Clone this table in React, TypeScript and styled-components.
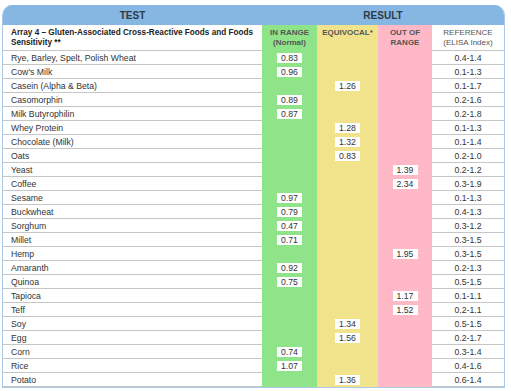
import React from "react";
import styled, { createGlobalStyle } from "styled-components";

type Tone = "plain" | "green" | "yellow" | "pink";

type RowData = {
  name: string;
  value: string;
  zone: "in" | "eq" | "out";
  range: string;
};

const rows: RowData[] = [
  { name: "Rye, Barley, Spelt, Polish Wheat", value: "0.83", zone: "in", range: "0.4-1.4" },
  { name: "Cow's Milk", value: "0.96", zone: "in", range: "0.1-1.3" },
  { name: "Casein (Alpha & Beta)", value: "1.26", zone: "eq", range: "0.1-1.7" },
  { name: "Casomorphin", value: "0.89", zone: "in", range: "0.2-1.6" },
  { name: "Milk Butyrophilin", value: "0.87", zone: "in", range: "0.2-1.8" },
  { name: "Whey Protein", value: "1.28", zone: "eq", range: "0.1-1.3" },
  { name: "Chocolate (Milk)", value: "1.32", zone: "eq", range: "0.1-1.4" },
  { name: "Oats", value: "0.83", zone: "eq", range: "0.2-1.0" },
  { name: "Yeast", value: "1.39", zone: "out", range: "0.2-1.2" },
  { name: "Coffee", value: "2.34", zone: "out", range: "0.3-1.9" },
  { name: "Sesame", value: "0.97", zone: "in", range: "0.1-1.3" },
  { name: "Buckwheat", value: "0.79", zone: "in", range: "0.4-1.3" },
  { name: "Sorghum", value: "0.47", zone: "in", range: "0.3-1.2" },
  { name: "Millet", value: "0.71", zone: "in", range: "0.3-1.5" },
  { name: "Hemp", value: "1.95", zone: "out", range: "0.3-1.5" },
  { name: "Amaranth", value: "0.92", zone: "in", range: "0.2-1.3" },
  { name: "Quinoa", value: "0.75", zone: "in", range: "0.5-1.5" },
  { name: "Tapioca", value: "1.17", zone: "out", range: "0.1-1.1" },
  { name: "Teff", value: "1.52", zone: "out", range: "0.2-1.1" },
  { name: "Soy", value: "1.34", zone: "eq", range: "0.5-1.5" },
  { name: "Egg", value: "1.56", zone: "eq", range: "0.2-1.7" },
  { name: "Corn", value: "0.74", zone: "in", range: "0.3-1.4" },
  { name: "Rice", value: "1.07", zone: "in", range: "0.4-1.6" },
  { name: "Potato", value: "1.36", zone: "eq", range: "0.6-1.4" },
];

const toneColors: Record<Tone, string> = {
  plain: "#ffffff",
  green: "#8fe48a",
  yellow: "#f0e38c",
  pink: "#ffb9c6",
};

const GlobalStyle = createGlobalStyle`
  body {
    margin: 0;
    background: #ffffff;
  }
`;

const Sheet = styled.div`
  margin: 5px 0 0 2px;
  width: 503px;
  box-sizing: border-box;
  border: 1px solid #a9c9e7;
  border-top: none;
  border-radius: 10px 10px 0 0;
  overflow: hidden;
  font-family: "Liberation Sans", Arial, sans-serif;
  color: #333333;
`;

const columns = "259px 55px 61px 54px 72px";

const Banner = styled.div`
  display: grid;
  grid-template-columns: 259px 242px;
  height: 20px;
  background: #86b7e2;
`;

const BannerTitle = styled.div`
  display: flex;
  align-items: center;
  justify-content: center;
  font-size: 10px;
  font-weight: bold;
  color: #2f3a45;
  padding-top: 1px;
`;

const Row = styled.div<{ $height: number }>`
  display: grid;
  grid-template-columns: ${columns};
  height: ${({ $height }) => $height}px;
`;

const Cell = styled.div<{ $tone: Tone; $align?: "left" | "center" }>`
  box-sizing: border-box;
  background: ${({ $tone }) => toneColors[$tone]};
  border-bottom: ${({ $tone }) => ($tone === "plain" ? "1px solid #c6c6c6" : "none")};
  display: flex;
  align-items: center;
  justify-content: ${({ $align }) => ($align === "left" ? "flex-start" : "center")};
  padding-left: ${({ $align }) => ($align === "left" ? "8px" : "0")};
  font-size: 8.7px;
  white-space: nowrap;
`;

const HeadCell = styled.div<{ $tone: Tone; $bold?: boolean; $align?: "left" | "center" }>`
  box-sizing: border-box;
  background: ${({ $tone }) => toneColors[$tone]};
  border-bottom: ${({ $tone }) => ($tone === "plain" ? "1px solid #c6c6c6" : "none")};
  padding: ${({ $align }) => ($align === "left" ? "3px 6px 0 8px" : "3px 0 0 0")};
  text-align: ${({ $align }) => ($align === "left" ? "left" : "center")};
  font-size: ${({ $align }) => ($align === "left" ? "8.2px" : "8px")};
  line-height: 9.5px;
  font-weight: ${({ $bold }) => ($bold ? "bold" : "normal")};
  color: ${({ $align }) => ($align === "left" ? "#222222" : "#555555")};
`;

const ValueBox = styled.span`
  display: inline-flex;
  align-items: center;
  justify-content: center;
  width: 25px;
  height: 10px;
  background: #ffffff;
  font-size: 8.7px;
  color: #333333;
`;

const zoneTone: Record<RowData["zone"], Tone> = {
  in: "green",
  eq: "yellow",
  out: "pink",
};

function ResultRow({ row }: { row: RowData }) {
  const tones: Tone[] = ["green", "yellow", "pink"];
  return (
    <Row $height={14}>
      <Cell $tone="plain" $align="left">{row.name}</Cell>
      {tones.map((tone) => (
        <Cell key={tone} $tone={tone}>
          {zoneTone[row.zone] === tone && <ValueBox>{row.value}</ValueBox>}
        </Cell>
      ))}
      <Cell $tone="plain">{row.range}</Cell>
    </Row>
  );
}

export default function App() {
  return (
    <>
      <GlobalStyle />
      <Sheet>
        <Banner>
          <BannerTitle>TEST</BannerTitle>
          <BannerTitle>RESULT</BannerTitle>
        </Banner>
        <Row $height={26}>
          <HeadCell $tone="plain" $align="left" $bold>
            Array 4 – Gluten-Associated Cross-Reactive Foods and Foods Sensitivity **
          </HeadCell>
          <HeadCell $tone="green" $bold>
            IN RANGE
            <br />
            (Normal)
          </HeadCell>
          <HeadCell $tone="yellow" $bold>
            EQUIVOCAL*
          </HeadCell>
          <HeadCell $tone="pink" $bold>
            OUT OF
            <br />
            RANGE
          </HeadCell>
          <HeadCell $tone="plain">
            REFERENCE
            <br />
            (ELISA Index)
          </HeadCell>
        </Row>
        {rows.map((row) => (
          <ResultRow key={row.name} row={row} />
        ))}
      </Sheet>
    </>
  );
}
